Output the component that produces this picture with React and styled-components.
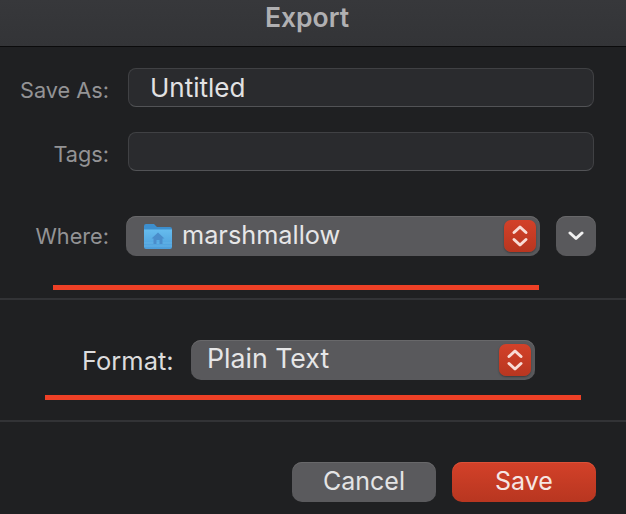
import React from "react";
import styled, { createGlobalStyle } from "styled-components";

const Global = createGlobalStyle`
  html, body { margin: 0; padding: 0; background: #1f2022; }
  body { width: 626px; height: 514px; overflow: hidden; font-family: Inter, "Liberation Sans", sans-serif; -webkit-font-smoothing: antialiased; }
`;
const Dialog = styled.div`
  width: 626px; height: 514px; background: #1f2022; display: flex; flex-direction: column;
`;
const TitleBar = styled.div`
  height: 47px; flex: none; box-sizing: border-box; background: linear-gradient(#37383b, #333437); border-bottom: 1px solid #0b0b0c;
  display: flex; align-items: center; justify-content: center;
  color: #b0b0b2; font-size: 26.5px; font-weight: 600; padding: 0 12px 13px 0;
`;
const Fields = styled.div`
  display: flex; flex-direction: column; gap: 25px; padding: 21px 32px 0 0;
`;
const FieldRow = styled.div`
  display: grid; grid-template-columns: 109px 1fr; column-gap: 19px; align-items: center;
`;
const Label = styled.div`
  text-align: right; color: ${p => p.$bright ? "#dcdcdd" : "#939395"}; font-size: ${p => p.$bright ? 25.5 : 21.7}px; white-space: nowrap;
`;
const FieldLabel = styled(Label)`
  padding-top: 4px;
`;
const TextBox = styled.div`
  height: 39px; box-sizing: border-box; background: #2a2b2e; border: 1px solid #404144; border-bottom-color: #525356; border-radius: 8px;
  color: #e2e2e3; font-size: 26px; padding-left: 21px; display: flex; align-items: center;
`;
const WhereRow = styled.div`
  display: flex; align-items: center; margin-top: 45px; height: 40px;
`;
const WhereLabel = styled(Label)`
  width: 109px; flex: none; margin-right: 17px;
`;
const Select = styled.div`
  width: ${p => p.$w}px; height: 40px; box-sizing: border-box; flex: none; border-radius: 10px; background: #59595c; box-shadow: inset 0 1px 0 #68686a;
  display: flex; align-items: center; padding: 0 4px 0 ${p => p.$pl}px; color: #e6e6e7; font-size: ${p => p.$fs}px;
`;
const SelectText = styled.span`
  flex: 1; margin-left: ${p => p.$ml || 0}px; padding-bottom: ${p => p.$pb || 0}px; white-space: nowrap;
`;
const Stepper = styled.div`
  width: 32px; height: 32px; flex: none; border-radius: 7px; background: linear-gradient(#d34129, #b83620); box-shadow: 0 1px 2px rgba(0,0,0,.35);
  display: flex; align-items: center; justify-content: center;
`;
const MoreButton = styled.div`
  width: 40px; height: 40px; margin-left: 16px; border-radius: 10px; background: #59595c; box-shadow: inset 0 1px 0 #68686a; flex: none;
  display: flex; align-items: center; justify-content: center;
`;
const Mark = styled.div`
  height: 5px; background: #ee4026; margin: ${p => p.$m}; flex: none;
`;
const Divider = styled.div`
  height: 2px; background: #323336; flex: none;
`;
const FormatRow = styled.div`
  display: flex; align-items: center; margin-top: 40px; height: 40px; padding-left: 82px;
`;
const FormatLabel = styled(Label)`
  width: 92px; flex: none; margin-right: 17px; text-align: left; padding-top: 1px;
`;
const Actions = styled.div`
  display: flex; justify-content: flex-end; gap: 16px; padding: 40px 30px 0 0;
`;
const Btn = styled.div`
  width: 144px; height: 40px; border-radius: 10px; display: flex; align-items: center; justify-content: center;
  font-size: 25px; padding-bottom: 2px; box-sizing: border-box;
  color: ${p => p.$primary ? "#f6e6e3" : "#e4e4e5"};
  background: ${p => p.$primary ? "linear-gradient(#d34129, #b83620)" : "#5a5a5d"};
  box-shadow: inset 0 1px 0 ${p => p.$primary ? "#dc5138" : "#68686a"};
`;

const StepIcon = () => (
  <svg width="18" height="24" viewBox="0 0 18 24" fill="none" stroke="#f8dcd6" strokeWidth="3" strokeLinecap="round" strokeLinejoin="round">
    <path d="M3 8.5 9 3l6 5.5" /><path d="M3 15.5 9 21l6-5.5" />
  </svg>
);
const ChevIcon = () => (
  <svg width="16" height="10" viewBox="0 0 16 10" fill="none" stroke="#f0f0f0" strokeWidth="3" strokeLinecap="round" strokeLinejoin="round">
    <path d="M2 2l6 5.5L14 2" />
  </svg>
);
const FolderIcon = () => (
  <svg width="30" height="28" viewBox="0 0 30 28" style={{ flex: "none" }}>
    <defs>
      <linearGradient id="fg" x1="0" y1="0" x2="0" y2="1">
        <stop offset="0" stopColor="#66bcee" /><stop offset="1" stopColor="#4c9edb" />
      </linearGradient>
    </defs>
    <path d="M1 4a2 2 0 0 1 2-2h8l3 3h13a2 2 0 0 1 2 2v2H1z" fill="#3d8fce" />
    <path d="M1 7.5h28V25a2 2 0 0 1-2 2H3a2 2 0 0 1-2-2z" fill="url(#fg)" />
    <path d="M1 21h28M1 24h28" stroke="#7cc6f2" strokeWidth=".6" opacity=".7" />
    <path d="M15 10.5 8.5 16.5h2v5.5h3v-4h3v4h3v-5.5h2z" fill="#4a8dcb" />
  </svg>
);

export default function App() {
  return (
    <>
      <Global />
      <Dialog>
        <TitleBar>Export</TitleBar>
        <Fields>
          <FieldRow><FieldLabel>Save As:</FieldLabel><TextBox>Untitled</TextBox></FieldRow>
          <FieldRow><FieldLabel>Tags:</FieldLabel><TextBox /></FieldRow>
        </Fields>
        <WhereRow>
          <WhereLabel>Where:</WhereLabel>
          <Select $w={414} $pl={17} $fs={25.3}>
            <FolderIcon />
            <SelectText $ml={9} $pb={3}>marshmallow</SelectText>
            <Stepper><StepIcon /></Stepper>
          </Select>
          <MoreButton><ChevIcon /></MoreButton>
        </WhereRow>
        <Mark $m="29px 87px 8px 53px" />
        <Divider />
        <FormatRow>
          <FormatLabel $bright>Format:</FormatLabel>
          <Select $w={344} $pl={16} $fs={26.7}>
            <SelectText $pb={4}>Plain Text</SelectText>
            <Stepper><StepIcon /></Stepper>
          </Select>
        </FormatRow>
        <Mark $m="15px 45px 20px 45px" />
        <Divider />
        <Actions>
          <Btn>Cancel</Btn>
          <Btn $primary>Save</Btn>
        </Actions>
      </Dialog>
    </>
  );
}
